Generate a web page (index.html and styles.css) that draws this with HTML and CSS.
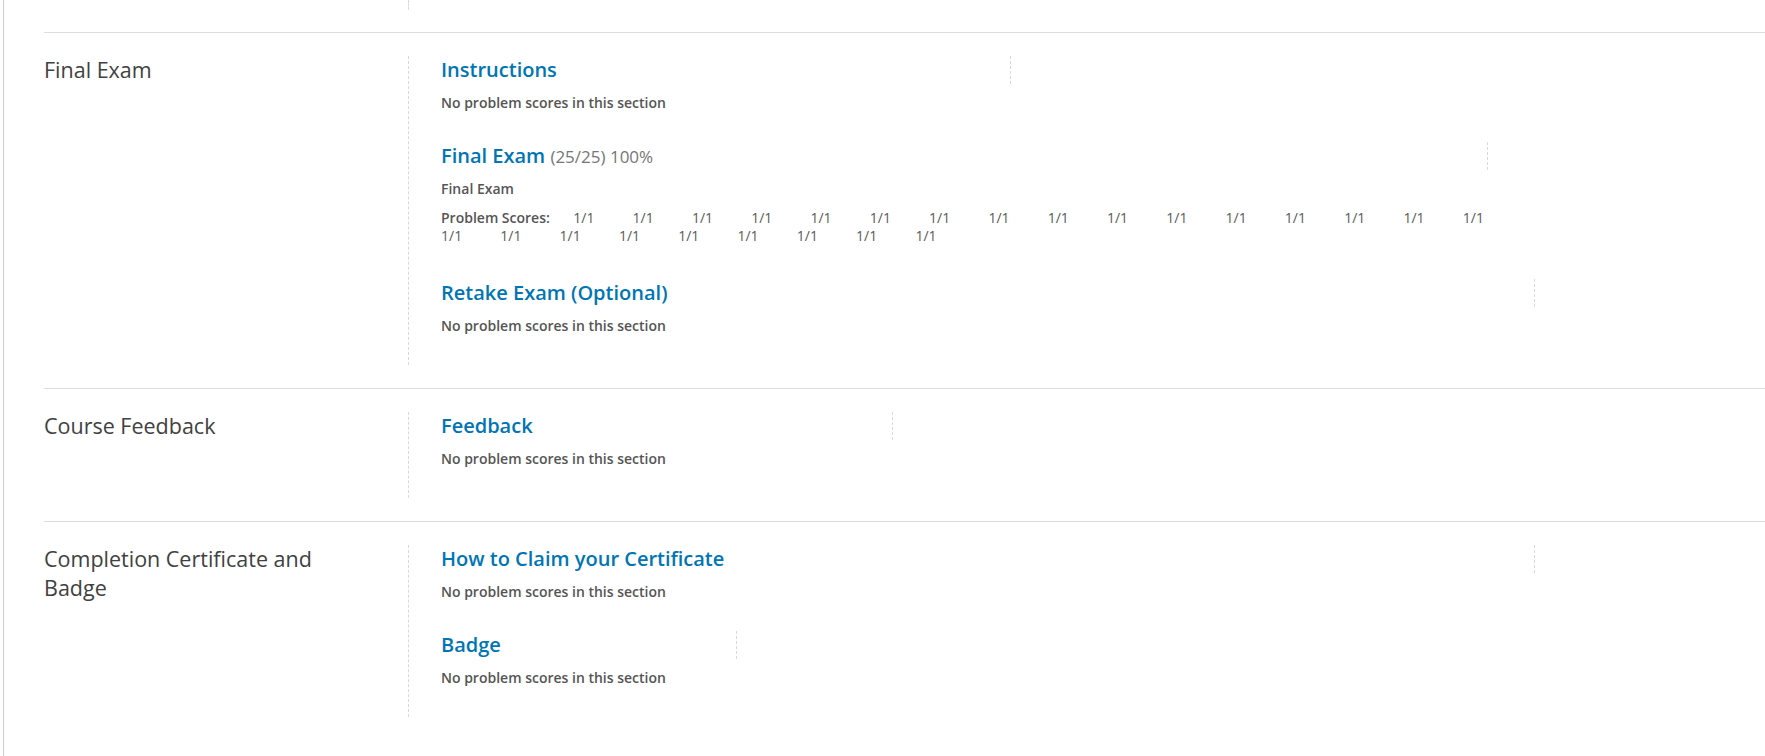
FILE: index.html
```html
<!DOCTYPE html>
<html lang="en">
<head>
<meta charset="utf-8">
<title>Progress</title>
<link rel="stylesheet" href="styles.css">
</head>
<body>
<div class="page">
  <div class="chapters">
    <section class="chapter chapter-tail">
      <div class="chapter-title"></div>
      <div class="sections tail-sections"></div>
    </section>

    <section class="chapter">
      <h2 class="chapter-title">Final Exam</h2>
      <div class="sections">
        <div class="subsection w-570">
          <h3 class="sub-title"><a href="#">Instructions</a></h3>
          <p class="no-scores">No problem scores in this section</p>
        </div>
        <div class="subsection w-1047">
          <h3 class="sub-title"><a href="#">Final Exam</a> <span class="score">(25/25) 100%</span></h3>
          <p class="format">Final Exam</p>
          <dl class="scores">
            <dt>Problem Scores:</dt>
            <dd>1/1</dd><dd>1/1</dd><dd>1/1</dd><dd>1/1</dd><dd>1/1</dd>
            <dd>1/1</dd><dd>1/1</dd><dd>1/1</dd><dd>1/1</dd><dd>1/1</dd>
            <dd>1/1</dd><dd>1/1</dd><dd>1/1</dd><dd>1/1</dd><dd>1/1</dd>
            <dd>1/1</dd><dd>1/1</dd><dd>1/1</dd><dd>1/1</dd><dd>1/1</dd>
            <dd>1/1</dd><dd>1/1</dd><dd>1/1</dd><dd>1/1</dd><dd>1/1</dd>
          </dl>
        </div>
        <div class="subsection w-1094">
          <h3 class="sub-title"><a href="#">Retake Exam (Optional)</a></h3>
          <p class="no-scores">No problem scores in this section</p>
        </div>
      </div>
    </section>

    <section class="chapter">
      <h2 class="chapter-title">Course Feedback</h2>
      <div class="sections">
        <div class="subsection w-452">
          <h3 class="sub-title"><a href="#">Feedback</a></h3>
          <p class="no-scores">No problem scores in this section</p>
        </div>
      </div>
    </section>

    <section class="chapter">
      <h2 class="chapter-title">Completion Certificate and Badge</h2>
      <div class="sections">
        <div class="subsection w-1094">
          <h3 class="sub-title"><a href="#">How to Claim your Certificate</a></h3>
          <p class="no-scores">No problem scores in this section</p>
        </div>
        <div class="subsection w-296">
          <h3 class="sub-title"><a href="#">Badge</a></h3>
          <p class="no-scores">No problem scores in this section</p>
        </div>
      </div>
    </section>
  </div>
</div>
</body>
</html>
```

FILE: styles.css
```css
html, body {
  margin: 0;
  padding: 0;
  background: #ffffff;
}

body {
  font-family: "Open Sans", "Noto Sans", "Liberation Sans", sans-serif;
  color: #333333;
  overflow: hidden;
}

.page {
  margin-left: 3px;
  border-left: 1px solid #cccccc;
  min-height: 756px;
  padding-left: 40px;
}

.chapters {
  display: flex;
  flex-direction: column;
}

.chapter {
  display: flex;
  border-top: 1px solid #dddddd;
  padding: 23px 0 23px;
}

.chapter-tail {
  border-top: none;
  padding-top: 0;
  padding-bottom: 22px;
}

.chapter-title {
  width: 304px;
  flex: 0 0 304px;
  margin: 0 60px 0 0;
  font-size: 21.5px;
  font-weight: 400;
  line-height: 28.5px;
  color: #414141;
}

.sections {
  flex: 1 1 auto;
  border-left: 1px dashed #d9d9d9;
  padding-left: 32px;
}

.tail-sections {
  height: 10px;
}

.subsection {
  margin-bottom: 30px;
}

.w-570 { width: 570px; }
.w-1047 { width: 1047px; }
.w-1094 { width: 1094px; }
.w-452 { width: 452px; }
.w-296 { width: 296px; }

.sub-title {
  margin: 0;
  height: 28px;
  line-height: 28px;
  font-size: 20px;
  font-weight: 600;
  border-right: 1px dashed #d9d9d9;
  white-space: nowrap;
}

.sub-title a {
  color: #0075b4;
  text-decoration: none;
}

.score {
  font-weight: 400;
  font-size: 17px;
  color: #767676;
}

.no-scores,
.format {
  margin: 10px 0 0;
  font-size: 14px;
  line-height: 18px;
  font-weight: 600;
  color: #555555;
}

.scores {
  display: flex;
  flex-wrap: wrap;
  column-gap: 41.3px;
  margin: 11px 0 0;
  padding-bottom: 4px;
  font-size: 14px;
  line-height: 18px;
  color: #5a5a5a;
}

.scores dt {
  width: 91px;
  white-space: nowrap;
  font-weight: 600;
  color: #555555;
}

.scores dd {
  width: 18px;
  margin: 0;
  white-space: nowrap;
}
```
